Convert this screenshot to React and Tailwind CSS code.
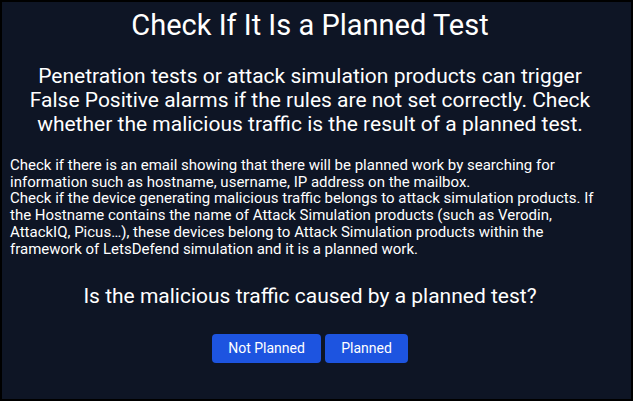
export default function App() {
  return (
    <div
      className="w-[633px] h-[401px] border-2 border-black bg-[#0e1525] text-white"
      style={{ fontFamily: "Roboto, 'Noto Sans', sans-serif" }}
    >
      <div className="pl-[8px] pr-[21px] flex flex-col">
        <h1 className="mt-[6px] text-center text-[29px] leading-[34px]">Check If It Is a Planned Test</h1>
        <p className="mt-[22px] px-[9px] text-center text-[21px] leading-[24px]">
          Penetration tests or attack simulation products can trigger False Positive alarms if the rules are
          not set correctly. Check whether the malicious traffic is the result of a planned test.
        </p>
        <div className="mt-[21px] text-[15px] leading-[16.7px]">
          <p>
            Check if there is an email showing that there will be planned work by searching for information such
            as hostname, username, IP address on the mailbox.
          </p>
          <p>
            Check if the device generating malicious traffic belongs to attack simulation products. If the
            Hostname contains the name of Attack Simulation products (such as Verodin, AttackIQ, Picus…), these
            devices belong to Attack Simulation products within the framework of LetsDefend simulation and it is
            a planned work.
          </p>
        </div>
        <p className="mt-[27px] text-center text-[21px] leading-[24px]">
          Is the malicious traffic caused by a planned test?
        </p>
        <div className="mt-[26px] flex justify-center gap-[4px]">
          <button className="h-[29px] w-[109px] rounded-[4px] bg-[#1d54e0] text-[14px]">Not Planned</button>
          <button className="h-[29px] w-[83px] rounded-[4px] bg-[#1d54e0] text-[14px]">Planned</button>
        </div>
      </div>
    </div>
  );
}
